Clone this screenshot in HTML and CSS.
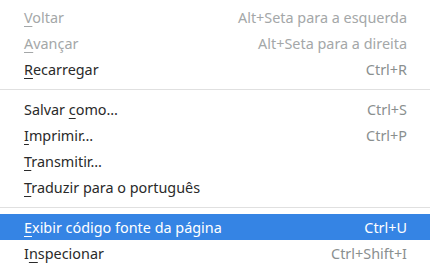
FILE: index.html
```html
<!DOCTYPE html>
<html>
<head>
<meta charset="utf-8">
<link rel="stylesheet" href="styles.css">
</head>
<body>
<div class="menu">
  <div class="item disabled"><span class="label"><u>V</u>oltar</span><span class="accel">Alt+Seta para a esquerda</span></div>
  <div class="item disabled"><span class="label"><u>A</u>vançar</span><span class="accel">Alt+Seta para a direita</span></div>
  <div class="item"><span class="label"><u>R</u>ecarregar</span><span class="accel">Ctrl+R</span></div>
  <div class="sep"></div>
  <div class="item"><span class="label">Salvar <u>c</u>omo…</span><span class="accel">Ctrl+S</span></div>
  <div class="item"><span class="label"><u>I</u>mprimir…</span><span class="accel">Ctrl+P</span></div>
  <div class="item"><span class="label"><u>T</u>ransmitir…</span><span class="accel"></span></div>
  <div class="item"><span class="label"><u>T</u>raduzir para o português</span><span class="accel"></span></div>
  <div class="sep"></div>
  <div class="item active"><span class="label"><u>E</u>xibir código fonte da página</span><span class="accel">Ctrl+U</span></div>
  <div class="item"><span class="label">I<u>n</u>specionar</span><span class="accel">Ctrl+Shift+I</span></div>
</div>
</body>
</html>
```
FILE: styles.css
```css
html, body {
  margin: 0;
  padding: 0;
  background: #ffffff;
}
.menu {
  width: 430px;
  height: 271px;
  padding-top: 4px;
  box-sizing: border-box;
  font-family: "Noto Sans", "Open Sans", sans-serif;
  font-size: 14.4px;
  color: #2a2a2a;
  background: #ffffff;
}
.item {
  height: 26px;
  display: flex;
  align-items: center;
  justify-content: space-between;
  padding: 0 23px 0 24px;
}
.label u {
  text-decoration: underline;
  text-underline-offset: 3px;
  text-decoration-thickness: 1px;
}
.accel {
  color: #8a8f8f;
}
.disabled .label {
  color: #a4a7a8;
}
.disabled .accel {
  color: #a4a7a8;
}
.active {
  background: #3584e4;
  color: #ffffff;
}
.active .accel {
  color: #ffffff;
}
.sep {
  height: 14px;
  display: flex;
  align-items: center;
}
.sep::before {
  content: "";
  display: block;
  width: 100%;
  height: 1px;
  background: #e0e0e0;
}
```
